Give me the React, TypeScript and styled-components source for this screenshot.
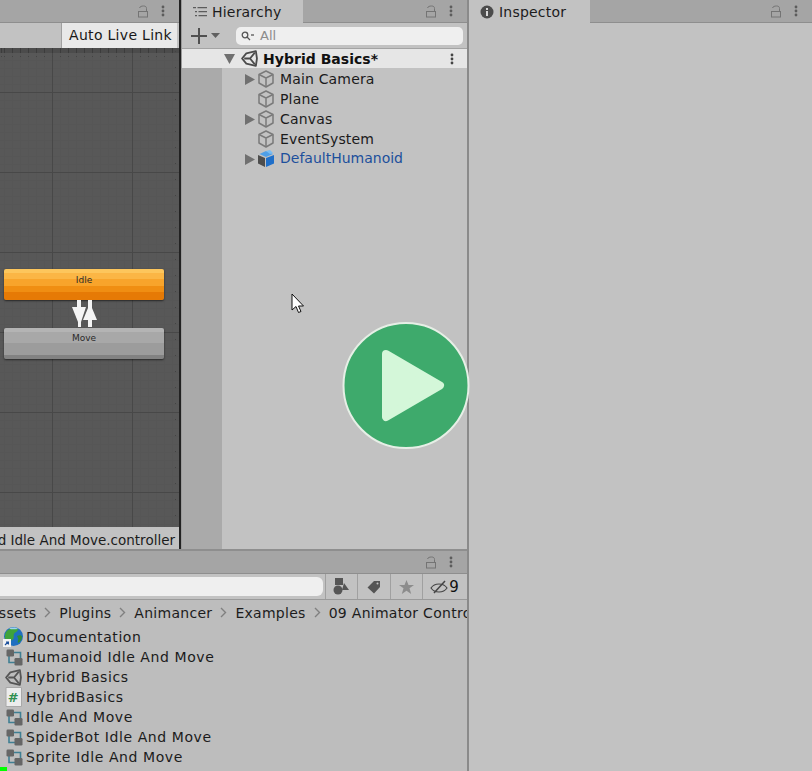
import { Fragment } from 'react';
import styled, { createGlobalStyle } from 'styled-components';

const Global = createGlobalStyle`
  html, body { margin: 0; padding: 0; background: #c2c2c2; }
  body { font-family: "DejaVu Sans", Verdana, sans-serif; color: #111; }
`

const Page = styled.div`
  position: relative;
  width: 812px;
  height: 771px;
  overflow: hidden;
  display: flex;
  background: #c2c2c2;
`
const LeftColumn = styled.div`
  width: 467px;
  height: 771px;
  display: flex;
  flex-direction: column;
  flex-shrink: 0;
`
const Divider = styled.div`
  width: 2px;
  background: #8a8a8a;
  flex-shrink: 0;
`
const TopRow = styled.div`
  height: 549px;
  display: flex;
  flex-shrink: 0;
`
const Tabs = styled.div`
  height: 23px;
  box-sizing: border-box;
  background: #a5a5a5;
  border-bottom: 1px solid #8e8e8e;
  display: flex;
  align-items: flex-start;
  justify-content: space-between;
  flex-shrink: 0;
`
const Tab = styled.div`
  width: 121px;
  height: 23px;
  padding-left: 11px;
  background: #c2c2c2;
  display: flex;
  align-items: center;
  gap: 5px;
  font-size: 14px;
  color: #1c1c1c;
  letter-spacing: 0.2px;
  box-sizing: border-box;
`
const TabActions = styled.div`
  display: flex;
  align-items: center;
  gap: 12px;
  height: 22px;
  padding-right: 14px;
  margin-left: auto;
`

/* animator */
const AnimatorPanel = styled.div`
  width: 179px;
  display: flex;
  flex-direction: column;
  flex-shrink: 0;
`
const AnimatorToolbar = styled.div`
  height: 25px;
  background: #c2c2c2;
  display: flex;
  justify-content: flex-end;
  flex-shrink: 0;
  padding-right: 2px;
`
const LiveLink = styled.div`
  width: 116px;
  height: 25px;
  padding-left: 2px;
  background: #e8e8e8;
  border-left: 1px solid #a0a0a0;
  box-sizing: border-box;
  font-size: 14px;
  line-height: 24px;
  text-align: center;
  letter-spacing: 0.3px;
  color: #181818;
`
const Graph = styled.div`
  position: relative;
  flex: 1;
  overflow: hidden;
  background-color: #585858;
  background-image:
    linear-gradient(90deg, #484848 1px, transparent 1px),
    linear-gradient(#484848 1px, transparent 1px),
    linear-gradient(90deg, #565656 1px, transparent 1px),
    linear-gradient(#565656 1px, transparent 1px);
  background-size: 80px 80px, 80px 80px, 8px 8px, 8px 8px;
  background-position: 52px 0, 0 44px, 4px 0, 0 4px;
`
const GraphEdge = styled.div`
  position: absolute;
  left: 0;
  right: 0;
  top: 0;
  height: 5px;
  background: #4c4c4c repeating-linear-gradient(90deg, #3c3c3c 0 1px, transparent 1px 8px) 4px 0;
`
const GraphDots = styled.div`
  position: absolute;
  left: 0;
  right: 8px;
  top: 8px;
  height: 1px;
  background: repeating-linear-gradient(90deg, #444 0 1px, transparent 1px 8px) 4px 0;
`
const GraphSideDots = styled.div`
  position: absolute;
  right: 3px;
  top: 3px;
  bottom: 0;
  width: 1px;
  background: repeating-linear-gradient(#444 0 1px, transparent 1px 16px);
`
const StateNode = styled.div<{ $top: number; $active?: boolean }>`
  position: absolute;
  left: 4px;
  top: ${p => p.$top}px;
  width: 160px;
  height: 31px;
  border-radius: 2px;
  box-sizing: border-box;
  padding-top: ${p => (p.$active ? 5 : 4)}px;
  font-size: 9px;
  line-height: 12px;
  text-align: center;
  color: #2a2a2a;
  box-shadow: 0 1px 2px rgba(0, 0, 0, 0.55);
  background: ${p => p.$active
    ? 'linear-gradient(#fdc65c 0 4px, #fbb645 4px 10px, #f8a42b 10px 17px, #f08e12 17px 23px, #e67a05 23px)'
    : 'linear-gradient(#b4b4b4 0 4px, #a8a8a8 4px 15px, #9c9c9c 15px 27px, #828282 27px)'};
`
const Transitions = styled.svg`
  position: absolute;
  left: 70px;
  top: 252px;
`
const StatusBar = styled.div`
  height: 22px;
  background: #c2c2c2;
  display: flex;
  justify-content: flex-end;
  overflow: hidden;
  font-size: 13.5px;
  line-height: 26px;
  padding-right: 4px;
  white-space: nowrap;
  color: #1c1c1c;
  flex-shrink: 0;
`
const BlackLine = styled.div`
  width: 3px;
  flex-shrink: 0;
  background: linear-gradient(90deg, #222 0, #222 2px, #9a9a9a 2px);
`

/* hierarchy */
const HierarchyPanel = styled.div`
  flex: 1;
  display: flex;
  flex-direction: column;
  min-width: 0;
`
const HierarchyToolbar = styled.div`
  height: 25px;
  background: #c2c2c2;
  display: flex;
  align-items: center;
  padding: 0 4px 0 9px;
  flex-shrink: 0;
`
const AddButton = styled.div`
  display: flex;
  align-items: center;
  gap: 4px;
  width: 45px;
`
const SearchField = styled.div`
  flex: 1;
  height: 18px;
  border-radius: 5px;
  background: #efefef;
  display: flex;
  align-items: center;
  padding-left: 5px;
  gap: 6px;
  font-size: 13px;
  color: #8c8c8c;
`
const SceneHeader = styled.div`
  height: 20px;
  background: #e6e6e6;
  display: flex;
  align-items: center;
  padding-left: 42px;
  font-size: 14px;
  font-weight: 700;
  color: #111;
  flex-shrink: 0;
  border-top: 1px solid #a4a4a4;
  box-sizing: border-box;
`
const SceneLogo = styled.span`
  display: flex;
  margin: 0 5px 0 6px;
`
const SceneName = styled.span`
  flex: 1;
  letter-spacing: 0.03px;
`
const HeaderDots = styled.div`
  margin-right: 13px;
  display: flex;
`
const TreeBody = styled.div`
  flex: 1;
  display: flex;
  min-height: 0;
`
const Gutter = styled.div`
  width: 40px;
  background: #aaaaaa;
  flex-shrink: 0;
`
const TreeList = styled.div`
  flex: 1;
  padding-top: 1px;
`
const TreeRow = styled.div`
  height: 20px;
  display: flex;
  align-items: center;
  padding-left: 23px;
`
const ArrowSlot = styled.div`
  width: 12px;
  display: flex;
  align-items: center;
  flex-shrink: 0;
`
const RowLabel = styled.span<{ $prefab?: boolean }>`
  font-size: 14px;
  margin: ${p => (p.$prefab ? '-2px' : '0')} 0 0 5px;
  letter-spacing: ${p => (p.$prefab ? '0' : '0.16px')};
  color: ${p => (p.$prefab ? '#1c4f9c' : '#1b1b1b')};
  white-space: nowrap;
`

/* project */
const ProjectPanel = styled.div`
  flex: 1;
  display: flex;
  flex-direction: column;
  min-height: 0;
`
const ProjectHeader = styled.div`
  height: 24px;
  background: #a5a5a5;
  border-top: 2px solid #8e8e8e;
  box-sizing: border-box;
  display: flex;
  align-items: center;
  justify-content: flex-end;
  flex-shrink: 0;
`
const ProjectToolbar = styled.div`
  height: 27px;
  box-sizing: border-box;
  background: #c2c2c2;
  border-top: 1px solid #8e8e8e;
  border-bottom: 1px solid #9a9a9a;
  display: flex;
  align-items: stretch;
  flex-shrink: 0;
`
const ProjectSearch = styled.div`
  width: 323px;
  height: 19px;
  margin-top: 3px;
  margin-right: 2px;
  background: #efefef;
  border-radius: 0 6px 6px 0;
  flex-shrink: 0;
`
const ToolButton = styled.div<{ $width: number }>`
  width: ${p => p.$width}px;
  border-left: 1px solid #a0a0a0;
  box-sizing: border-box;
  display: flex;
  align-items: center;
  justify-content: center;
  gap: 1px;
  font-size: 15px;
  flex-shrink: 0;
`
const Breadcrumbs = styled.div`
  height: 25px;
  background: #bdbdbd;
  display: flex;
  align-items: center;
  justify-content: flex-start;
  overflow: hidden;
  white-space: nowrap;
  font-size: 14px;
  color: #1c1c1c;
  letter-spacing: 0.28px;
  flex-shrink: 0;
`
const Crumb = styled.span`
  flex-shrink: 0;
`
const CrumbFirst = styled(Crumb)`
  margin-left: -11px;
`
const CrumbSep = styled.svg`
  margin: 0 8px;
  flex-shrink: 0;
`
const AssetList = styled.div`
  position: relative;
  flex: 1;
  background: #bdbdbd;
  padding: 2px 0 0 3px;
`
const AssetRow = styled.div`
  height: 20px;
  display: flex;
  align-items: center;
  gap: 3px;
  font-size: 14px;
  letter-spacing: 0.58px;
  color: #1b1b1b;
  white-space: nowrap;
`
const IconSlot = styled.div`
  width: 20px;
  height: 20px;
  display: flex;
  align-items: center;
  justify-content: center;
  flex-shrink: 0;
`
const GreenMark = styled.div`
  position: absolute;
  left: 0;
  bottom: 0;
  width: 7px;
  height: 4px;
  background: #00ff00;
`

/* inspector */
const InspectorPanel = styled.div`
  flex: 1;
  display: flex;
  flex-direction: column;
  background: #c2c2c2;
`

/* overlays */
const PlayBadge = styled.svg`
  position: absolute;
  left: 342px;
  top: 322px;
`
const Pointer = styled.svg`
  position: absolute;
  left: 291px;
  top: 293px;
`

const LockIcon = () => (
  <svg width="12" height="13" viewBox="0 0 12 13" fill="none" stroke="#747474" strokeWidth="1">
    <path d="M2.500 3C3 1.500 4.500 1 6.500 1s3 .8 3 2.500V7" />
    <rect x="1.500" y="6.500" width="9" height="5.500" />
  </svg>
)
const MenuDots = ({ color = '#5c5c5c' }: { color?: string }) => (
  <svg width="4" height="12" viewBox="0 0 4 12">
    <circle cx="2" cy="2" r="1.400" fill={color} />
    <circle cx="2" cy="6" r="1.400" fill={color} />
    <circle cx="2" cy="10" r="1.400" fill={color} />
  </svg>
)
const TriRight = () => (
  <svg width="10" height="11" viewBox="0 0 10 11"><path d="M0 0l10 5.500L0 11z" fill="#707070" /></svg>
)
const TriDown = () => (
  <svg width="11" height="10" viewBox="0 0 11 10"><path d="M0 0h11L5.500 10z" fill="#707070" /></svg>
)
const UnityLogo = ({ size = 16, color = '#4a4a4a' }: { size?: number; color?: string }) => (
  <svg width={size} height={size} viewBox="0 0 16 16" fill="none" stroke={color} strokeWidth="1.700" strokeLinejoin="round">
    <path d="M1 8l4-4.800 9-2.200 1 7-1 7-9-2.200z" />
    <path d="M3 8h5.500L13 2.500M8.500 8L13 13.500" />
  </svg>
)
const CubeIcon = () => (
  <svg width="18" height="18" viewBox="0 0 18 18" fill="none" stroke="#7a7a7a" strokeWidth="1.500" strokeLinejoin="round">
    <path d="M9 1l7 3.500v8.500L9 17l-7-4V4.500z" />
    <path d="M2 4.500L9 8l7-3.500M9 8v9" />
  </svg>
)
const PrefabIcon = () => (
  <svg width="18" height="18" viewBox="0 0 18 18">
    <path d="M1 5l7 3v9l-7-3.500z" fill="#4d4d4d" />
    <path d="M9 8l8-3v8.500L9 17z" fill="#1f6fc9" />
    <path d="M2.500 4L9 1l7 3-7 3z" fill="#4e9fe8" />
    <path d="M9 1l4-1 3 3-3 1z" fill="#79bdf4" />
  </svg>
)
const ControllerIcon = () => (
  <svg width="19" height="18" viewBox="0 0 19 18">
    <path d="M9 4.500h7.500V11" fill="none" stroke="#3f7f93" strokeWidth="1.600" />
    <path d="M5 8v6.500h6" fill="none" stroke="#3f7f93" strokeWidth="1.600" />
    <rect x="2.500" y="1.500" width="7.500" height="7" rx="1.200" fill="#666" />
    <rect x="10.500" y="10" width="8" height="7.500" rx="1.200" fill="#666" />
  </svg>
)
const GlobeIcon = () => (
  <svg width="20" height="20" viewBox="0 0 20 20">
    <circle cx="10.500" cy="9.500" r="9.500" fill="#1f6fc0" />
    <path d="M3 5c3-4 8-5 12-3 0 3-3 3-4 5s1 4-2 6-3 4-5 2S1 9 3 5z" fill="#3fa33c" />
    <path d="M14 9c2-1 5-1 5 1 0 3-2 5-4 6-1-2 1-3 0-5z" fill="#2f8d38" />
    <path d="M6 1.500C9 0 13 0 15 2c-3 0-6 1-9-.5z" fill="#9fd6ef" />
    <rect x="0" y="12" width="8" height="8" fill="#f2f2f2" />
    <path d="M2 18l3-3M3 15h2.400v2.400" stroke="#1b4f9c" strokeWidth="1.200" fill="none" />
  </svg>
)
const ScriptIcon = () => (
  <svg width="17" height="20" viewBox="0 0 17 20">
    <path d="M1 .5h15.500v19H1z" fill="#ececec" stroke="#a8a8a8" />
    <text x="8.600" y="15" fontSize="13" fontWeight="700" fontFamily="DejaVu Sans" fill="#2f8e4e" textAnchor="middle">#</text>
  </svg>
)
const ChevronSep = () => (
  <CrumbSep width="7" height="11" viewBox="0 0 7 11">
    <path d="M1 1l4.500 4.500L1 10" fill="none" stroke="#808080" strokeWidth="1.400" />
  </CrumbSep>
)

const hierarchyRows = [
  { name: 'Main Camera', arrow: true },
  { name: 'Plane', arrow: false },
  { name: 'Canvas', arrow: true },
  { name: 'EventSystem', arrow: false },
]

const assets = [
  { name: 'Documentation', icon: <GlobeIcon /> },
  { name: 'Humanoid Idle And Move', icon: <ControllerIcon /> },
  { name: 'Hybrid Basics', icon: <UnityLogo size={17} color="#555" /> },
  { name: 'HybridBasics', icon: <ScriptIcon /> },
  { name: 'Idle And Move', icon: <ControllerIcon /> },
  { name: 'SpiderBot Idle And Move', icon: <ControllerIcon /> },
  { name: 'Sprite Idle And Move', icon: <ControllerIcon /> },
]

const crumbs = ['Plugins', 'Animancer', 'Examples', '09 Animator Controllers']

export default function App() {
  return (
    <Page>
      <Global />
      <LeftColumn>
        <TopRow>
          <AnimatorPanel>
            <Tabs>
              <TabActions><LockIcon /><MenuDots /></TabActions>
            </Tabs>
            <AnimatorToolbar><LiveLink>Auto Live Link</LiveLink></AnimatorToolbar>
            <Graph>
              <GraphEdge />
              <GraphDots />
              <GraphSideDots />
              <StateNode $top={221} $active>Idle</StateNode>
              <Transitions width="30" height="28" viewBox="0 0 30 28">
                <path d="M7 0h4v7h5l-5 15v5H8v-5L2 7h5z" fill="#f4f4f4" />
                <path d="M18 0h4v8l5 12h-5v7h-4v-7h-5l5-12z" fill="#f4f4f4" />
              </Transitions>
              <StateNode $top={280}>Move</StateNode>
            </Graph>
            <StatusBar>d Idle And Move.controller</StatusBar>
          </AnimatorPanel>
          <BlackLine />
          <HierarchyPanel>
            <Tabs>
              <Tab>
                <svg width="14" height="12" viewBox="0 0 14 12" fill="#5c5c5c">
                  <path d="M0 1h3v1.200H0zM4.500 1H14v1.200H4.500zM2 5h2v1.200H2zM5.500 5H14v1.200H5.500zM2 9h2v1.200H2zM5.500 9H14v1.200H5.500z" />
                </svg>
                Hierarchy
              </Tab>
              <TabActions><LockIcon /><MenuDots /></TabActions>
            </Tabs>
            <HierarchyToolbar>
              <AddButton>
                <svg width="16" height="16" viewBox="0 0 16 16"><path d="M7 0h2v7h7v2H9v7H7V9H0V7h7z" fill="#505050" /></svg>
                <svg width="9" height="5" viewBox="0 0 9 5"><path d="M0 0h9L4.500 5z" fill="#606060" /></svg>
              </AddButton>
              <SearchField>
                <svg width="13" height="10" viewBox="0 0 13 10" fill="none" stroke="#555" strokeWidth="1.300">
                  <circle cx="4" cy="4" r="2.800" />
                  <path d="M6 6l3 3" />
                  <path d="M10 4h3" />
                </svg>
                All
              </SearchField>
            </HierarchyToolbar>
            <SceneHeader>
              <TriDown />
              <SceneLogo><UnityLogo size={17} /></SceneLogo>
              <SceneName>Hybrid Basics*</SceneName>
              <HeaderDots><MenuDots color="#444" /></HeaderDots>
            </SceneHeader>
            <TreeBody>
              <Gutter />
              <TreeList>
                {hierarchyRows.map(row => (
                  <TreeRow key={row.name}>
                    <ArrowSlot>{row.arrow && <TriRight />}</ArrowSlot>
                    <CubeIcon />
                    <RowLabel>{row.name}</RowLabel>
                  </TreeRow>
                ))}
                <TreeRow>
                  <ArrowSlot><TriRight /></ArrowSlot>
                  <PrefabIcon />
                  <RowLabel $prefab>DefaultHumanoid</RowLabel>
                </TreeRow>
              </TreeList>
            </TreeBody>
          </HierarchyPanel>
        </TopRow>
        <ProjectPanel>
          <ProjectHeader>
            <TabActions><LockIcon /><MenuDots /></TabActions>
          </ProjectHeader>
          <ProjectToolbar>
            <ProjectSearch />
            <ToolButton $width={32}>
              <svg width="17" height="17" viewBox="0 0 17 17" fill="#555">
                <rect x="2" y="0" width="8" height="7" />
                <circle cx="5" cy="12" r="4.500" />
                <path d="M11 5l5 7h-7z" />
              </svg>
            </ToolButton>
            <ToolButton $width={33}>
              <svg width="14" height="14" viewBox="0 0 14 14" fill="#555">
                <path d="M7 1h6v6l-6 6.500L.500 7.500zM10.500 2.500a1 1 0 100 2 1 1 0 000-2z" fillRule="evenodd" />
              </svg>
            </ToolButton>
            <ToolButton $width={32}>
              <svg width="15" height="14" viewBox="0 0 15 14" fill="#8c8c8c">
                <path d="M7.500 0l2 5h5.500l-4.500 3.300 1.700 5.700-4.700-3.300L2.800 14l1.700-5.700L0 5h5.500z" />
              </svg>
            </ToolButton>
            <ToolButton $width={44}>
              <svg width="18" height="14" viewBox="0 0 18 14" fill="none" stroke="#444" strokeWidth="1.200">
                <path d="M1 8c2-3 5-4 8-4s6 1 8 4c-2 3-5 4-8 4s-6-1-8-4z" />
                <path d="M4 13L15 1" strokeWidth="1.500" />
              </svg>
              9
            </ToolButton>
          </ProjectToolbar>
          <Breadcrumbs>
            <CrumbFirst>Assets</CrumbFirst>
            {crumbs.map(c => (
              <Fragment key={c}>
                <ChevronSep />
                <Crumb>{c}</Crumb>
              </Fragment>
            ))}
          </Breadcrumbs>
          <AssetList>
            {assets.map(a => (
              <AssetRow key={a.name}>
                <IconSlot>{a.icon}</IconSlot>
                {a.name}
              </AssetRow>
            ))}
            <GreenMark />
          </AssetList>
        </ProjectPanel>
      </LeftColumn>
      <Divider />
      <InspectorPanel>
        <Tabs>
          <Tab>
            <svg width="14" height="14" viewBox="0 0 14 14">
              <circle cx="7" cy="7" r="6.500" fill="#4c4c4c" />
              <rect x="6" y="6" width="2" height="5" fill="#d8d8d8" />
              <rect x="6" y="3" width="2" height="2" fill="#d8d8d8" />
            </svg>
            Inspector
          </Tab>
          <TabActions><LockIcon /><MenuDots /></TabActions>
        </Tabs>
      </InspectorPanel>
      <PlayBadge width="128" height="128" viewBox="0 0 128 128">
        <circle cx="64" cy="63.500" r="62.500" fill="#3eaa6c" stroke="#e6efe6" strokeWidth="2" />
        <path d="M44 32L98 63.500 44 95z" fill="#d4f7d9" stroke="#d4f7d9" strokeWidth="8" strokeLinejoin="round" />
      </PlayBadge>
      <Pointer width="14" height="22" viewBox="0 0 14 22">
        <path d="M1 1v16l4-3.500 2.500 6 2.500-1-2.500-5.500h5z" fill="#fff" stroke="#111" strokeWidth="1" />
      </Pointer>
    </Page>
  )
}
